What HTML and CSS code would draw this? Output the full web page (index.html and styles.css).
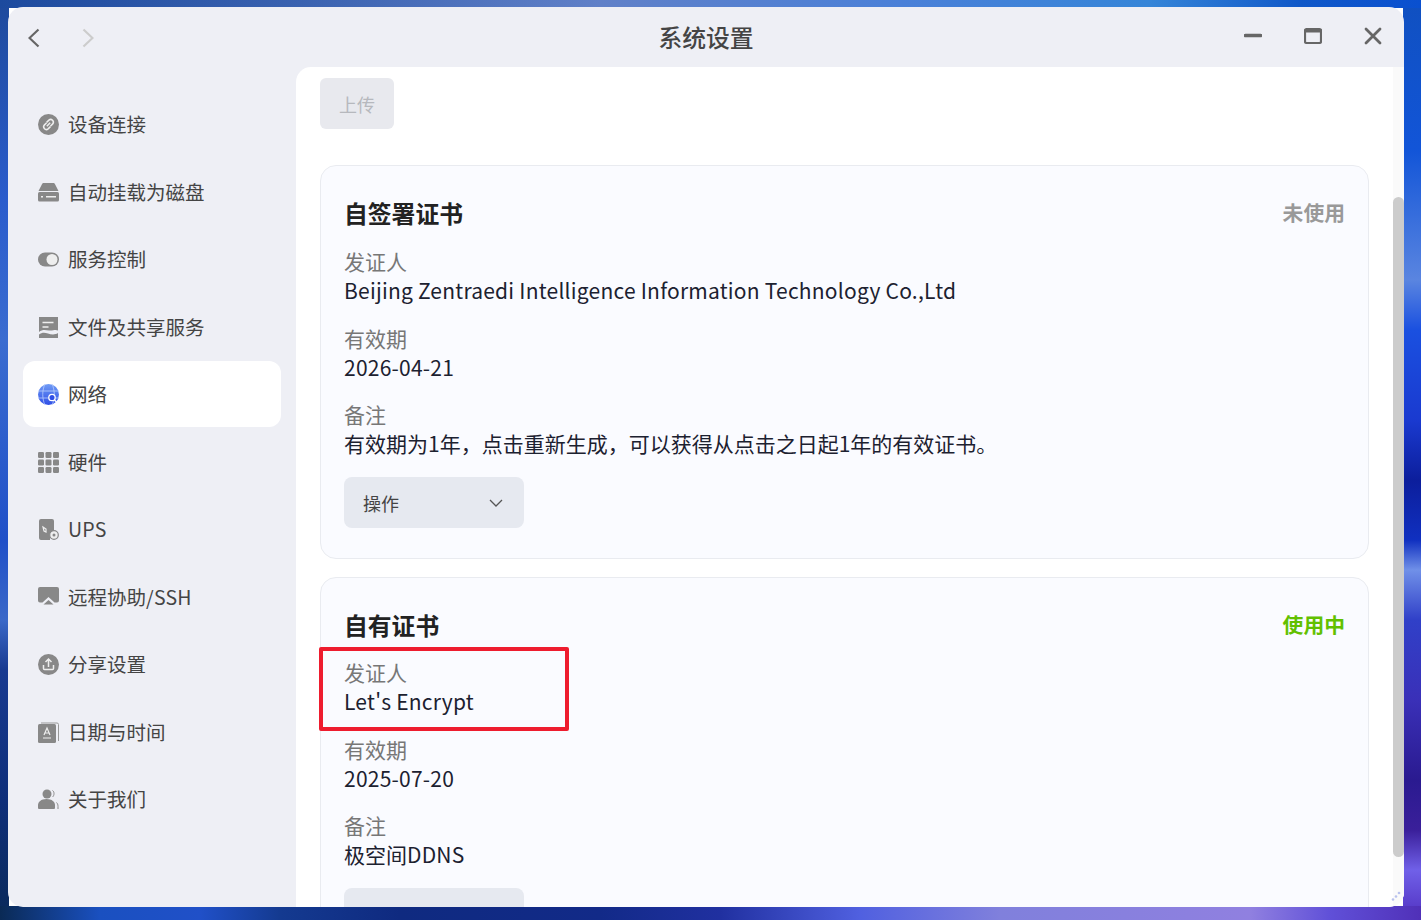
FILE: index.html
```html
<!DOCTYPE html>
<html lang="zh-CN">
<head>
    <meta charset="utf-8" />
    <title>系统设置</title>
    <link rel="stylesheet" href="styles.css">
</head>
<body>
    <div class="win">
        <div class="titlebar">
            <div class="nav">
                <svg class="nav-ico" viewBox="0 0 12 22"><path d="M10.5 3.500 1.500 12l9 8.500" stroke="#666" /></svg>
                <svg class="nav-ico" viewBox="0 0 12 22"><path d="M1.500 3.500l9 8.500-9 8.500" stroke="#ccc" /></svg>
            </div>
            <div class="title">系统设置</div>
            <div class="winbtns">
                <svg class="winbtn" viewBox="0 0 18 18"><path d="M1.500 8.500h15" stroke-width="3.600" /></svg>
                <svg class="winbtn" viewBox="0 0 18 18"><rect x="1" y="2" width="16" height="14" rx="1.500" stroke-width="2.200" /><path d="M1 4h16" stroke-width="3" /></svg>
                <svg class="winbtn" viewBox="0 0 18 18"><path d="M2 2l14 14M16 2 2 16" stroke-width="2.800" /></svg>
            </div>
        </div>
        <div class="body">
            <ul class="side">
                <li class="li">
                    <svg class="ico" viewBox="0 0 21 21"><circle cx="10.500" cy="10.500" r="10.500" fill="#888" /><path d="M8.800 12.200l3.400-3.400M8.600 8.800l-2.300 2.300a2.700 2.700 0 0 0 3.800 3.800l2.300-2.300M12.400 12.200l2.300-2.300a2.700 2.700 0 0 0-3.800-3.800L8.600 8.400" fill="none" stroke="#eee" stroke-width="1.500" /></svg>
                    <span>设备连接</span>
                </li>
                <li class="li">
                    <svg class="ico" viewBox="0 0 21 21"><path d="M5.500 1h10a1.500 1.500 0 0 1 1.300.7L20.500 9H.5l3.700-7.300A1.500 1.500 0 0 1 5.500 1z" fill="#888" /><rect y="10" width="21" height="9.500" rx="1.500" fill="#888" /><path d="M3 14.700h2M8 14.700h10" stroke="#eee" stroke-width="1.400" /></svg>
                    <span>自动挂载为磁盘</span>
                </li>
                <li class="li">
                    <svg class="ico" viewBox="0 0 21 21"><rect y="3.500" width="21" height="14" rx="7" fill="#888" /><circle cx="14" cy="10.500" r="5.500" fill="#eee" /></svg>
                    <span>服务控制</span>
                </li>
                <li class="li">
                    <svg class="ico" viewBox="0 0 21 21"><path d="M1 0h19v13.500c-3-1.500-5 .5-9 0-4-.5-7-1-10 1.500z" fill="#888" /><path d="M1 17.500c3-2.500 6-2 9-1s7 1.500 10-.5V21H1z" fill="#888" /><path d="M4.500 5.500h11M4.500 10h6" stroke="#eee" stroke-width="1.600" /></svg>
                    <span>文件及共享服务</span>
                </li>
                <li class="li on">
                    <svg class="ico" viewBox="0 0 21 21"><defs><linearGradient id="globe" x1="0" y1="0" x2="0" y2="1"><stop offset="0" stop-color="#6f9bf5" /><stop offset="1" stop-color="#2f4fe6" /></linearGradient></defs><circle cx="10.500" cy="10.500" r="10.500" fill="url(#globe)" /><path d="M0 7h21M0 14h21M7 0c-3 6-3 15 0 21M14 0c3 6 3 15 0 21" fill="none" stroke="#b9cdfb" stroke-width=".8" /><circle cx="14" cy="13.500" r="3.200" fill="#2f4fe6" stroke="#fff" stroke-width="1.300" /><path d="M16.500 16l3 3" stroke="#fff" stroke-width="1.500" /></svg>
                    <span>网络</span>
                </li>
                <li class="li">
                    <svg class="ico" viewBox="0 0 21 21" fill="#888"><rect width="6" height="6" rx="1.200" /><rect x="7.500" width="6" height="6" rx="1.200" /><rect x="15" width="6" height="6" rx="1.200" /><rect y="7.500" width="6" height="6" rx="1.200" /><rect x="7.500" y="7.500" width="6" height="6" rx="1.200" /><rect x="15" y="7.500" width="6" height="6" rx="1.200" /><rect y="15" width="6" height="6" rx="1.200" /><rect x="7.500" y="15" width="6" height="6" rx="1.200" /><rect x="15" y="15" width="6" height="6" rx="1.200" /></svg>
                    <span>硬件</span>
                </li>
                <li class="li">
                    <svg class="ico" viewBox="0 0 21 21"><path d="M3 0h11a2 2 0 0 1 2 2v12h-4v7H3a2 2 0 0 1-2-2V2a2 2 0 0 1 2-2z" fill="#888" /><path d="M5 8l3 2v3l-2-1z" fill="none" stroke="#eee" stroke-width="1.200" /><circle cx="16" cy="16" r="4.300" fill="#eee" stroke="#888" stroke-width="1.200" /><circle cx="16" cy="16" r="1.500" fill="#888" /></svg>
                    <span class="lat">UPS</span>
                </li>
                <li class="li">
                    <svg class="ico" viewBox="0 0 21 21"><path d="M2 0h17a2 2 0 0 1 2 2v11.500a2 2 0 0 1-2 2h-2.500L10.500 10l-6 5.500H2a2 2 0 0 1-2-2V2a2 2 0 0 1 2-2z" fill="#888" /><path d="M5.500 17.500l5-4.500 5 4.500z" fill="#888" /></svg>
                    <span>远程协助<i class="lat">/SSH</i></span>
                </li>
                <li class="li">
                    <svg class="ico" viewBox="0 0 21 21"><circle cx="10.500" cy="10.500" r="10.500" fill="#888" /><path d="M10.500 13V5.500M7.500 8l3-3 3 3M5.500 11v3.500a1 1 0 0 0 1 1h8a1 1 0 0 0 1-1V11" fill="none" stroke="#eee" stroke-width="1.500" /></svg>
                    <span>分享设置</span>
                </li>
                <li class="li">
                    <svg class="ico" viewBox="0 0 21 21"><rect y="2" width="18" height="19" rx="1.500" fill="#888" /><path d="M3 1h16a1.500 1.500 0 0 1 1.500 1.500V19" fill="none" stroke="#999" stroke-width="1" /><path d="M6 13l3-7 3 7M7 11h4M5 16h8" fill="none" stroke="#eee" stroke-width="1.200" /></svg>
                    <span>日期与时间</span>
                </li>
                <li class="li">
                    <svg class="ico" viewBox="0 0 21 21" fill="#888"><circle cx="9" cy="5" r="4.500" /><path d="M0 19v-3c0-3 3-6 8.500-6s8.500 3 8.500 6v3a1 1 0 0 1-1 1H1a1 1 0 0 1-1-1z" /><path d="M14.500 1.500c2 1 2 5 0 6.500M20 20v-2.500c0-2-.5-3-1.500-4" fill="none" stroke="#888" stroke-width="1" /></svg>
                    <span>关于我们</span>
                </li>
            </ul>
            <div class="main">
                <div class="scroll">
                    <a class="btn btn-off">上传</a>
                    <div class="card">
                        <div class="card-hd"><b>自签署证书</b><span class="st">未使用</span></div>
                        <div class="row"><label>发证人</label><p class="lat">Beijing Zentraedi Intelligence Information Technology Co.,Ltd</p></div>
                        <div class="row"><label>有效期</label><p class="lat">2026-04-21</p></div>
                        <div class="row"><label>备注</label><p>有效期为1年，点击重新生成，可以获得从点击之日起1年的有效证书。</p></div>
                        <a class="sel">操作<svg class="arrow" viewBox="0 0 14 8"><path d="M1 1l6 6 6-6" /></svg></a>
                    </div>
                    <div class="card">
                        <div class="card-hd"><b>自有证书</b><span class="st st-on">使用中</span></div>
                        <div class="mark-wrap">
                            <div class="mark"></div>
                            <div class="row"><label>发证人</label><p class="lat">Let's Encrypt</p></div>
                        </div>
                        <div class="row"><label>有效期</label><p class="lat">2025-07-20</p></div>
                        <div class="row"><label>备注</label><p>极空间<i class="lat">DDNS</i></p></div>
                        <a class="sel"></a>
                    </div>
                </div>
                <div class="bar"><i class="thumb"></i></div>
                <svg class="grip" viewBox="0 0 12 12"><circle cx="10" cy="2" r="1.300" /><circle cx="7" cy="5.500" r="1.300" /><circle cx="4" cy="8.500" r="1.300" /></svg>
            </div>
        </div>
    </div>
</body>
</html>
```

FILE: styles.css
```css
html, body { height: 100%; margin: 0; }
body { height: 920px; overflow: hidden; box-sizing: border-box; padding: 7px 17px 13px 8px; font-family: "Noto Sans CJK SC", "Noto Sans", sans-serif; color: #1c2130;
    background-repeat: no-repeat;
    background-image:
        linear-gradient(90deg, #1c4a9e 0, #3a62b0 300px, #6080c8 600px, #4a80d8 900px, #3585d8 1150px, #1058c8 1300px, #0a50d0 100%),
        linear-gradient(90deg, #0a2a55 0, #1a50c0 100px, #2050c8 200px, #143a90 280px, #0f2a80 400px, #122a88 600px, #2030a0 720px, #5060e0 860px, #8080dc 1000px, #9080e0 1250px, #6050d8 1330px, #5030b8 100%),
        linear-gradient(180deg, #1e4a9c 0, #2a5ccc 200px, #3a6cd0 340px, #2050c8 540px, #3a68c8 620px, #183a90 670px, #0f2f7a 800px, #0a2a5a 100%),
        linear-gradient(180deg, #1050c0 0, #1255d8 150px, #5a85e0 280px, #1a50e0 330px, #1a3ad0 420px, #0c1e9c 480px, #1030c0 540px, #7090e8 570px, #3040c8 620px, #3a30b8 700px, #2a1a90 780px, #3a1f9a 830px, #7060e8 870px, #5030c0 100%);
    background-size: 100% 8px, 100% 14px, 9px 100%, 18px 100%;
    background-position: 0 0, 0 100%, 0 0, 100% 0; }
ul, p { margin: 0; padding: 0; }
i { font-style: normal; }
.lat { letter-spacing: .23px; }

.win { height: 900px; display: flex; flex-direction: column; background: #eeeff5; border-radius: 15px; overflow: hidden; }

.titlebar { height: 60px; flex: none; display: flex; align-items: center; position: relative; }
.nav { display: flex; gap: 42px; padding-left: 20px; margin-top: -1px; }
.nav-ico { width: 12px; height: 22px; }
.nav-ico path { fill: none; stroke-width: 2.200; }
.title { position: absolute; left: 0; right: 0; text-align: center; font-size: 23.800px; font-weight: 500; color: #444; line-height: 60px; }
.winbtns { margin-left: auto; display: flex; gap: 42px; padding-right: 22px; margin-top: -3px; }
.winbtn { width: 18px; height: 18px; }
.winbtn path, .winbtn rect { fill: none; stroke: #666; stroke-linecap: round; }

.body { flex: 1; display: flex; min-height: 0; }

.side { width: 258px; flex: none; padding: 24px 15px 0; list-style: none; }
.li { height: 67.500px; display: flex; align-items: center; gap: 9px; padding-left: 15px; box-sizing: border-box; font-size: 19.500px; color: #444; border-radius: 12px; }
.li span { position: relative; top: -1px; }
.li.on { background: #fff; height: 66px; margin-bottom: 1.500px; }
.ico { width: 21px; height: 21px; flex: none; }

.main { flex: 1; min-width: 0; display: flex; background: #fff; border-radius: 15px 0 0 0; position: relative; }
.scroll { flex: 1; min-width: 0; padding: 11px 24px 0; overflow: hidden; }
.bar { width: 11px; flex: none; background: #fafafa; padding-top: 130px; }
.thumb { display: block; height: 660px; background: #ccc; border-radius: 6px; }
.grip { position: absolute; right: 3px; bottom: 4px; width: 12px; height: 12px; fill: #b9c2ee; }

.btn { display: block; width: 74px; height: 51px; line-height: 53px; text-align: center; font-size: 18px; border-radius: 6px; }
.btn-off { background: #e8e9ee; color: #b6b8bd; }

.card { background: #fafbff; border: 1px solid #e9ebf0; border-radius: 16px; padding: 27px 23px 30px; margin-top: 36px; }
.card + .card { margin-top: 18px; }
.card-hd { display: flex; justify-content: space-between; align-items: center; height: 44px; margin-top: -3px; }
.card-hd b { font-size: 23.800px; font-weight: 700; color: #222; }
.st { font-size: 20.800px; font-weight: 700; color: #999; }
.st-on { color: #62c000; }

.row { font-size: 21px; line-height: 29px; margin-bottom: 18.500px; }
.row label { display: block; color: #777; }
.row p { color: #1c2130; }
.card-hd + .row { margin-top: 13px; }
.card-hd + .mark-wrap { margin-top: 12px; }
.mark-wrap { position: relative; }
.mark { position: absolute; left: -25px; top: -11px; width: 242px; height: 76px; border: 4px solid #ee1c2e; border-radius: 2px; }

.sel { display: flex; align-items: center; justify-content: space-between; width: 180px; height: 51px; box-sizing: border-box; padding: 0 21px 0 19px; background: #e6e9f0; border-radius: 8px; font-size: 18px; color: #444; margin-top: 19px; }
.arrow { width: 14px; height: 8px; }
.arrow path { fill: none; stroke: #555; stroke-width: 1.300; }
```
